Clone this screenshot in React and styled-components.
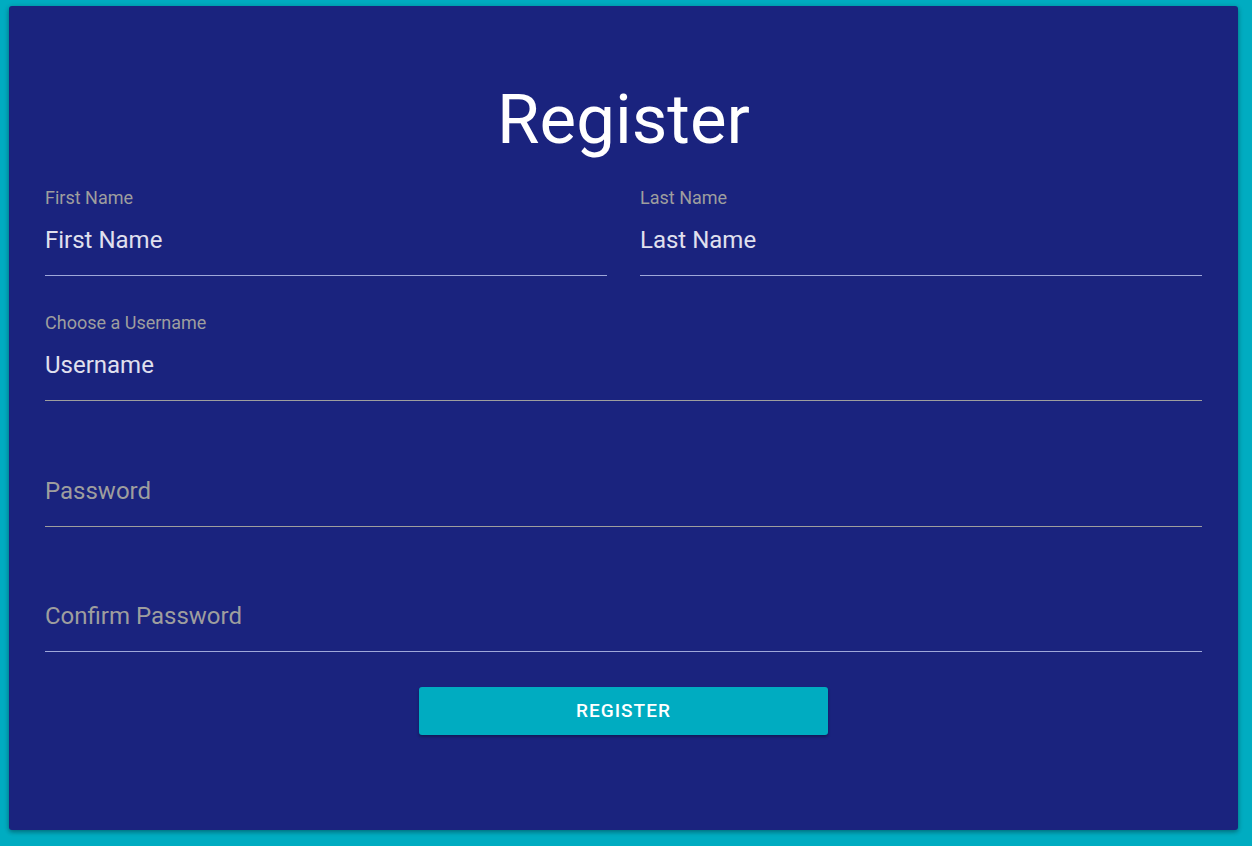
import React from "react";
import styled, { createGlobalStyle } from "styled-components";

const GlobalStyle = createGlobalStyle`
  html, body {
    margin: 0;
    padding: 0;
    background: #00acc1;
  }
  * {
    box-sizing: border-box;
  }
`;

const Page = styled.div`
  min-height: 846px;
  padding: 6px 14px 16px 9px;
  font-family: Roboto, "Noto Sans", sans-serif;
`;

const Card = styled.form`
  background: #1a237e;
  border-radius: 3px;
  box-shadow: 0 2px 4px rgba(0, 0, 0, 0.28), 0 1px 6px rgba(0, 0, 0, 0.14);
  padding: 74px 36px 95px;
  height: 824px;
`;

const Title = styled.h1`
  margin: 0 0 27px;
  text-align: center;
  color: #ffffff;
  font-size: 69px;
  font-weight: 400;
  line-height: 80px;
`;

const Row = styled.div`
  display: grid;
  grid-template-columns: ${(p) => (p.$split ? "1fr 1fr" : "1fr")};
  column-gap: 33px;
  margin-bottom: 36.4px;
`;

const Field = styled.div`
  display: flex;
  flex-direction: column;
`;

const Label = styled.label`
  height: 22px;
  line-height: 22px;
  font-size: 18px;
  color: #9e9e9e;
`;

const Input = styled.input`
  height: 67px;
  padding: 0 0 4px;
  background: transparent;
  border: none;
  border-bottom: 1px solid ${(p) => (p.$soft ? "#9fa8da" : "#9e9e9e")};
  outline: none;
  font-family: Roboto, "Noto Sans", sans-serif;
  font-size: 24px;
  color: #e0e0ee;

  &::placeholder {
    color: ${(p) => (p.$filled ? "#e0e0ee" : "#9e9e9e")};
    opacity: 1;
  }
`;

const Actions = styled.div`
  display: flex;
  justify-content: center;
  margin-top: -2px;
`;

const Button = styled.button`
  width: 409px;
  height: 48px;
  border: none;
  border-radius: 3px;
  background: #00acc1;
  color: #ffffff;
  font-family: Roboto, "Noto Sans", sans-serif;
  font-size: 19px;
  font-weight: 500;
  letter-spacing: 1px;
  text-transform: uppercase;
  box-shadow: 0 2px 3px rgba(0, 0, 0, 0.3);
  cursor: pointer;
`;

export default function App() {
  return (
    <>
      <GlobalStyle />
      <Page>
        <Card onSubmit={(e) => e.preventDefault()}>
          <Title>Register</Title>

          <Row $split>
            <Field>
              <Label>First Name</Label>
              <Input $soft $filled placeholder="First Name" />
            </Field>
            <Field>
              <Label>Last Name</Label>
              <Input $soft $filled placeholder="Last Name" />
            </Field>
          </Row>

          <Row>
            <Field>
              <Label>Choose a Username</Label>
              <Input $filled placeholder="Username" />
            </Field>
          </Row>

          <Row>
            <Field>
              <Label />
              <Input type="password" placeholder="Password" />
            </Field>
          </Row>

          <Row>
            <Field>
              <Label />
              <Input $soft type="password" placeholder="Confirm Password" />
            </Field>
          </Row>

          <Actions>
            <Button type="submit">Register</Button>
          </Actions>
        </Card>
      </Page>
    </>
  );
}
